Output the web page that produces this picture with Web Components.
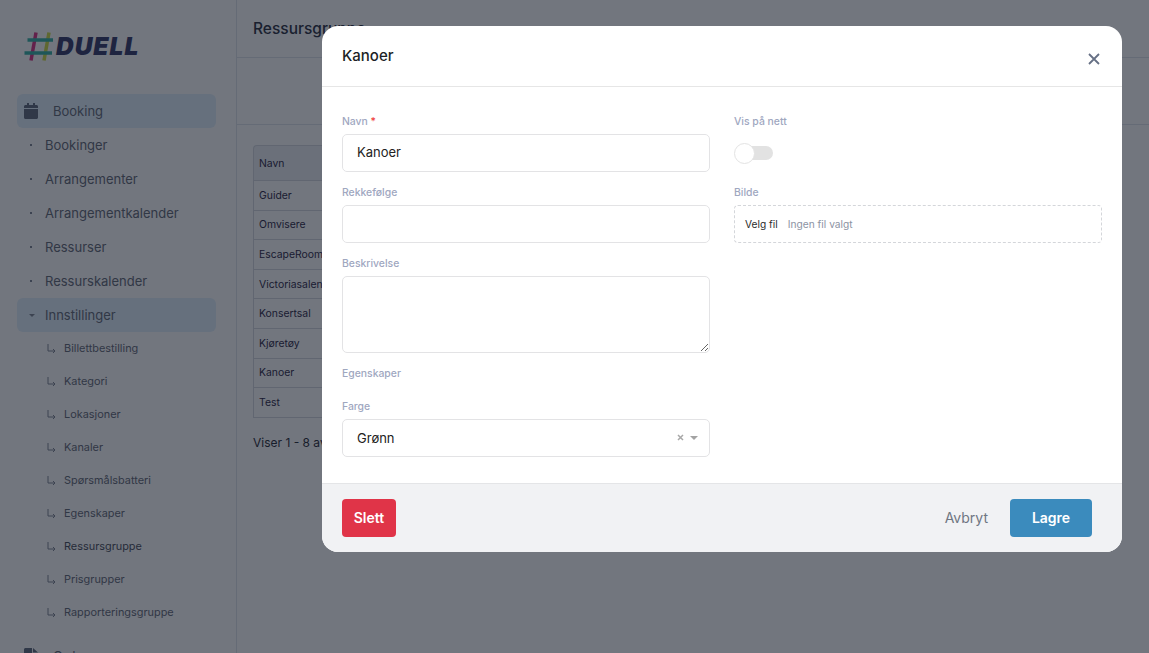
<!DOCTYPE html>
<html lang="no">
<head>
<meta charset="utf-8">
<title>Ressursgruppe</title>
<style>
    html, body { margin: 0; height: 100%; overflow: hidden; background: #fff; }
    body { font-family: Inter, "Liberation Sans", sans-serif; }
</style>
</head>
<body>
<duell-app>
    <duell-sidebar slot="sidebar">
        <nav-item active icon="calendar">Booking</nav-item>
        <nav-item mark="dot">Bookinger</nav-item>
        <nav-item mark="dot">Arrangementer</nav-item>
        <nav-item mark="dot">Arrangementkalender</nav-item>
        <nav-item mark="dot">Ressurser</nav-item>
        <nav-item mark="dot">Ressurskalender</nav-item>
        <nav-item active mark="caret">Innstillinger</nav-item>
        <sub-item>Billettbestilling</sub-item>
        <sub-item>Kategori</sub-item>
        <sub-item>Lokasjoner</sub-item>
        <sub-item>Kanaler</sub-item>
        <sub-item>Spørsmålsbatteri</sub-item>
        <sub-item>Egenskaper</sub-item>
        <sub-item current>Ressursgruppe</sub-item>
        <sub-item>Prisgrupper</sub-item>
        <sub-item>Rapporteringsgruppe</sub-item>
        <nav-item class="next" icon="file">Ordrer</nav-item>
    </duell-sidebar>
    <page-main title="Ressursgruppe">
        <data-table></data-table>
        <p>Viser 1 - 8 av 8</p>
    </page-main>
    <modal-dialog slot="modal" heading="Kanoer">
        <form-field label="Navn" required><text-box>Kanoer</text-box></form-field>
        <form-field slot="right" label="Vis på nett"><toggle-switch></toggle-switch></form-field>
        <form-field label="Rekkefølge"><text-box></text-box></form-field>
        <form-field slot="right" label="Bilde"><file-box></file-box></form-field>
        <form-field label="Beskrivelse"><area-box></area-box></form-field>
        <form-field label="Egenskaper" bare></form-field>
        <form-field label="Farge"><select-box>Grønn</select-box></form-field>
        <app-button slot="footer-left" kind="danger">Slett</app-button>
        <app-button slot="footer-right" kind="link">Avbryt</app-button>
        <app-button slot="footer-right" kind="primary">Lagre</app-button>
    </modal-dialog>
</duell-app>

<script>
// small base class, every component only supplies its markup
class ShadowEl extends HTMLElement {
    constructor() {
        super();
        this.attachShadow({mode: 'open'});
    }
    connectedCallback() {
        this.shadowRoot.innerHTML = this.markup();
    }
}

const icons = {
    calendar: `<svg width="14" height="16" viewBox="0 0 14 16"><path fill="#5a6478" d="M3 0h2v2h4V0h2v2h1.500C13.300 2 14 2.700 14 3.500V5H0V3.500C0 2.700 .7 2 1.500 2H3zM0 6h14v8.500c0 .8-.7 1.500-1.500 1.500h-11C.7 16 0 15.300 0 14.500z"/></svg>`,
    file: `<svg width="14" height="16" viewBox="0 0 14 16"><path fill="#5a6478" d="M1.500 0H8v4.500c0 .6.4 1 1 1h5V14.500c0 .8-.7 1.500-1.500 1.500h-11C.7 16 0 15.300 0 14.500v-13C0 .7.7 0 1.500 0zM9 0l5 4.500H9z"/></svg>`
};

class DuellApp extends ShadowEl {
    markup() {
        return `
            <style>
                :host { display: block; position: relative; height: 653px; overflow: hidden; }
                .shell { display: flex; height: 100%; }
                .backdrop { position: absolute; inset: 0; background: rgba(20, 27, 40, .6); }
                .top { position: absolute; left: 322px; top: 26px; }
            </style>
            <div class="shell">
                <slot name="sidebar"></slot>
                <slot></slot>
            </div>
            <div class="backdrop"></div>
            <div class="top"><slot name="modal"></slot></div>
        `;
    }
}

class DuellSidebar extends ShadowEl {
    markup() {
        return `
            <style>
                :host { display: block; width: 236px; flex: none; border-right: 1px solid #dfe3ea; }
                .logo { display: flex; align-items: center; gap: 3px; height: 94px; padding: 0 0 2px 24px; box-sizing: border-box; }
                .logo span { font: italic 900 24.500px Inter, sans-serif; color: #2f3264; letter-spacing: 1px; line-height: 30px; }
                nav { display: flex; flex-direction: column; padding: 0 20px 0 17px; }
            </style>
            <div class="logo">
                <svg width="29" height="31" viewBox="0 0 29 31">
                    <path d="M12 1.500 7 29.500" stroke="#d92c7f" stroke-width="3.500"/>
                    <path d="M25 1.500 20 29.500" stroke="#cfdc3f" stroke-width="3.500"/>
                    <path d="M3.500 9H29M.5 22H28" stroke="#2fb0a2" stroke-width="3.500"/>
                </svg>
                <span>DUELL</span>
            </div>
            <nav><slot></slot></nav>
        `;
    }
}

class NavItem extends ShadowEl {
    markup() {
        const icon = this.getAttribute('icon');
        const mark = this.getAttribute('mark');
        let lead = '';
        if (icon) {
            lead = `<i class="icon">${icons[icon]}</i>`;
        } else if (mark === 'caret') {
            lead = `<i class="mark"><b class="caret"></b></i>`;
        } else {
            lead = `<i class="mark"><b class="dot"></b></i>`;
        }
        return `
            <style>
                :host { display: block; }
                :host(.next) { margin-top: 10px; }
                .row { display: flex; align-items: center; height: 34px; border-radius: 6px; padding-left: 7px; color: #5d6472; font-size: 13px; box-sizing: border-box; }
                :host([active]) .row { background: #e1f0fd; }
                i { display: flex; align-items: center; flex: none; font-style: normal; }
                .icon { width: 29px; }
                .mark { width: 21px; padding-left: 6px; box-sizing: border-box; }
                .dot { width: 1.500px; height: 1.500px; background: #788090; }
                .caret { border: 3px solid transparent; border-top-color: #788090; border-bottom: 0; margin-left: -1px; }
                svg { display: block; }
            </style>
            <div class="row">${lead}<slot></slot></div>
        `;
    }
}

class SubItem extends ShadowEl {
    markup() {
        return `
            <style>
                :host { display: flex; align-items: center; height: 33px; padding-left: 30px; gap: 8px; font-size: 10.900px; color: #5d6472; }
                :host([current]) { color: #3f4654; }
                svg { flex: none; }
                span { padding-bottom: 1px; }
            </style>
            <svg width="9" height="10" viewBox="0 0 9 10" fill="none" stroke="#7a8190" stroke-width="1"><path d="M1 0v7h7M6 5 8 7 6 9"/></svg>
            <span><slot></slot></span>
        `;
    }
}

class PageMain extends ShadowEl {
    markup() {
        return `
            <style>
                :host { display: block; flex: 1; min-width: 0; }
                header { height: 58px; box-sizing: border-box; border-bottom: 1px solid #dfe3ea; padding-left: 16px; display: flex; align-items: center; font-size: 15.500px; font-weight: 500; color: #23293a; }
                .bar { height: 67px; box-sizing: border-box; border-bottom: 1px solid #dfe3ea; }
                .content { padding: 20px 27px 0 16px; color: #1d2330; }
                ::slotted(p) { margin: 17px 0 0; font-size: 12px; line-height: 16px; }
            </style>
            <header>${this.getAttribute('title')}</header>
            <div class="bar"></div>
            <div class="content"><slot></slot></div>
        `;
    }
}

class DataTable extends ShadowEl {
    markup() {
        const names = ['Guider', 'Omvisere', 'EscapeRoom', 'Victoriasalen', 'Konsertsal', 'Kjøretøy', 'Kanoer', 'Test'];
        const rows = names.map(n => `<tr><td>${n}</td></tr>`).join('');
        return `
            <style>
                :host { display: block; }
                table { width: 100%; border-collapse: separate; border-spacing: 0; font-size: 10.400px; color: #262040; }
                th, td { border: 1px solid #d5d8df; border-width: 0 0 1px 1px; text-align: left; font-weight: 400; padding: 0 0 0 5px; height: 28.600px; }
                th { height: 34px; background: #eef0f4; border-top-width: 1px; border-top-left-radius: 4px; }
            </style>
            <table><tr><th>Navn</th></tr>${rows}</table>
        `;
    }
}

class ModalDialog extends ShadowEl {
    markup() {
        return `
            <style>
                :host { display: block; width: 800px; height: 526px; background: #fff; border-radius: 16px; overflow: hidden; color: #1c1f26; }
                header { height: 61px; box-sizing: border-box; border-bottom: 1px solid #e6e6e6; display: flex; align-items: center; justify-content: space-between; padding: 0 22px 0 20px; font-size: 15px; font-weight: 500; }
                header span { padding-bottom: 2px; }
                header svg { margin-top: 5px; }
                .body { height: 396px; box-sizing: border-box; padding: 26px 20px 0; display: grid; grid-template-columns: 368px 368px; column-gap: 24px; align-items: start; }
                .col { display: flex; flex-direction: column; }
                footer { height: 69px; box-sizing: border-box; border-top: 1px solid #e4e5e7; background: #f1f2f4; display: flex; align-items: center; justify-content: space-between; padding: 0 30px 1px 20px; }
                .right { display: flex; align-items: center; gap: 22px; }
            </style>
            <header>
                <span>${this.getAttribute('heading')}</span>
                <svg width="12" height="12" viewBox="0 0 12 12"><path d="M1 1l10 10M11 1 1 11" stroke="#667085" stroke-width="1.800" fill="none"/></svg>
            </header>
            <div class="body">
                <div class="col"><slot></slot></div>
                <div class="col"><slot name="right"></slot></div>
            </div>
            <footer>
                <slot name="footer-left"></slot>
                <div class="right"><slot name="footer-right"></slot></div>
            </footer>
        `;
    }
}

class FormField extends ShadowEl {
    markup() {
        const star = this.hasAttribute('required') ? ' <em>*</em>' : '';
        return `
            <style>
                :host { display: block; padding-bottom: 12px; }
                :host([bare]) { padding-bottom: 17px; }
                label { display: block; font-size: 10.400px; font-weight: 500; line-height: 15px; padding-top: 1px; color: #a0a7bf; margin-bottom: 5px; }
                :host([bare]) label { margin-bottom: 0; }
                em { color: #ef4444; font-style: normal; }
            </style>
            <label>${this.getAttribute('label')}${star}</label>
            <slot></slot>
        `;
    }
}

class TextBox extends ShadowEl {
    markup() {
        return `
            <style>
                :host { display: flex; align-items: center; height: 38px; box-sizing: border-box; border: 1px solid #e3e3e5; border-radius: 5px; padding: 0 14px 2px; font-size: 13px; color: #222; }
            </style>
            <slot></slot>
        `;
    }
}

class AreaBox extends ShadowEl {
    markup() {
        return `
            <style>
                :host { display: block; height: 77px; }
                textarea { display: block; width: 100%; height: 77px; box-sizing: border-box; border: 1px solid #e3e3e5; border-radius: 5px; outline: 0; margin: 0; }
            </style>
            <textarea></textarea>
        `;
    }
}

class SelectBox extends ShadowEl {
    markup() {
        return `
            <style>
                :host { display: flex; align-items: center; height: 38px; box-sizing: border-box; border: 1px solid #e3e3e5; border-radius: 5px; padding: 0 11px 1px 14px; font-size: 13px; color: #222; }
                .tools { margin-left: auto; display: flex; align-items: center; gap: 6px; }
                .caret { border: 4px solid transparent; border-top: 4.500px solid #a3a3a3; border-bottom: 0; }
                svg { display: block; }
            </style>
            <slot></slot>
            <div class="tools">
                <svg width="7" height="7" viewBox="0 0 7 7"><path d="M1 1l5 5M6 1 1 6" stroke="#a8a8a8" stroke-width="1.500"/></svg>
                <b class="caret"></b>
            </div>
        `;
    }
}

class FileBox extends ShadowEl {
    markup() {
        return `
            <style>
                :host { display: flex; align-items: center; height: 38px; box-sizing: border-box; border: 1px dashed #d4d6da; border-radius: 4px; padding: 0 10px; gap: 10px; font-size: 10.200px; }
                .btn { color: #2b2b2b; }
                .none { color: #8c93a3; }
            </style>
            <span class="btn">Velg fil</span>
            <span class="none">Ingen fil valgt</span>
        `;
    }
}

class ToggleSwitch extends ShadowEl {
    markup() {
        return `
            <style>
                :host { display: block; position: relative; width: 39px; height: 21px; margin-top: 14px; padding-bottom: 8px; }
                .track { position: absolute; left: 2px; right: 0; top: 3px; height: 14px; border-radius: 7px; background: #e2e2e2; }
                .knob { position: absolute; left: 0; top: 0; width: 21px; height: 21px; box-sizing: border-box; border-radius: 50%; background: #fff; border: 1px solid #e3e3e3; }
            </style>
            <div class="track"></div>
            <div class="knob"></div>
        `;
    }
}

class AppButton extends ShadowEl {
    markup() {
        return `
            <style>
                :host { display: inline-flex; align-items: center; justify-content: center; height: 38px; box-sizing: border-box; border-radius: 4px; font-size: 14px; font-weight: 600; color: #fff; }
                :host([kind=danger]) { background: #e03448; width: 54px; }
                :host([kind=primary]) { background: #3b8bbd; width: 82px; }
                :host([kind=link]) { color: #6f7682; font-weight: 400; }
            </style>
            <slot></slot>
        `;
    }
}

customElements.define('duell-app', DuellApp);
customElements.define('duell-sidebar', DuellSidebar);
customElements.define('nav-item', NavItem);
customElements.define('sub-item', SubItem);
customElements.define('page-main', PageMain);
customElements.define('data-table', DataTable);
customElements.define('modal-dialog', ModalDialog);
customElements.define('form-field', FormField);
customElements.define('text-box', TextBox);
customElements.define('area-box', AreaBox);
customElements.define('select-box', SelectBox);
customElements.define('file-box', FileBox);
customElements.define('toggle-switch', ToggleSwitch);
customElements.define('app-button', AppButton);
</script>
</body>
</html>
